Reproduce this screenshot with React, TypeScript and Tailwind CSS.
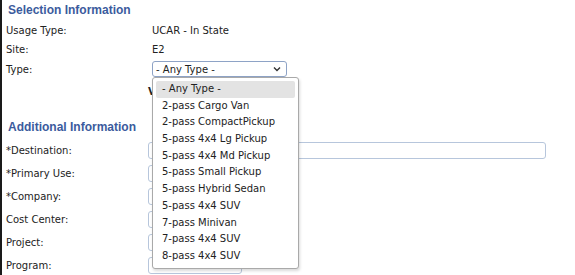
import React from "react";

const TYPES = [
  "- Any Type -",
  "2-pass Cargo Van",
  "2-pass CompactPickup",
  "5-pass 4x4 Lg Pickup",
  "5-pass 4x4 Md Pickup",
  "5-pass Small Pickup",
  "5-pass Hybrid Sedan",
  "5-pass 4x4 SUV",
  "7-pass Minivan",
  "7-pass 4x4 SUV",
  "8-pass 4x4 SUV",
];

const ADDITIONAL = [
  { label: "*Destination:", wide: true },
  { label: "*Primary Use:" },
  { label: "*Company:" },
  { label: "Cost Center:" },
  { label: "Project:" },
  { label: "Program:" },
];

function Heading({ children }: { children: React.ReactNode }) {
  return (
    <h2 className="pl-[2px] font-['Liberation_Sans',Arial,sans-serif] text-[12px] font-bold leading-[18px] text-[#3b5b9d]">
      {children}
    </h2>
  );
}

function Chevron() {
  return (
    <svg width="8" height="6" viewBox="0 0 8 6" className="text-[#333]">
      <path d="M1 1.5 L4 4.5 L7 1.5" fill="none" stroke="currentColor" strokeWidth="1.4" />
    </svg>
  );
}

export default function App() {
  return (
    <div className="h-[275px] w-[575px] overflow-hidden border-l-2 border-[#1a1a1a] bg-white font-['DejaVu_Sans',Verdana,sans-serif] text-[10px] text-[#222]">
      <div className="pl-1">
        <div className="pt-[1px]">
          <Heading>Selection Information</Heading>
        </div>

        <div className="mt-[2px] grid grid-cols-[146px_1fr] items-center">
          <span className="leading-[19px]">Usage Type:</span>
          <span className="leading-[19px]">UCAR - In State</span>
          <span className="leading-[20px]">Site:</span>
          <span className="leading-[20px]">E2</span>
          <span className="leading-[20px]">Type:</span>
          <div className="relative h-[20px]">
            <div className="mt-[1px] flex h-[16px] w-[135px] items-center justify-between rounded-[3px] border border-[#8ea3c6] bg-white pl-[3px] pr-[5px]">
              <span>- Any Type -</span>
              <Chevron />
            </div>

            <ul className="absolute left-0 top-[17px] z-10 w-[147px] rounded-[3px] border border-[#a9a9a9] bg-white px-[3px] py-[3px] shadow-[1px_2px_3px_rgba(0,0,0,0.15)]">
              {TYPES.map((t, i) => (
                <li
                  key={t}
                  className={
                    "h-[16.7px] rounded-[2px] pl-[6px] leading-[16.7px] " +
                    (i === 0 ? "bg-[#e3e3e3]" : "")
                  }
                >
                  {t}
                </li>
              ))}
            </ul>
          </div>
        </div>

        <div className="h-[24px] pl-[142px] leading-[24px] font-bold">Vehicle</div>

        <div className="mt-[14px]">
          <Heading>Additional Information</Heading>
        </div>

        <div className="mt-[3px] flex flex-col">
          {ADDITIONAL.map((f) => (
            <div key={f.label} className="grid h-[23px] grid-cols-[142px_1fr] items-center">
              <span>{f.label}</span>
              <div
                className={
                  "h-[17px] rounded-[3px] border border-[#b7c6dc] bg-white " +
                  (f.wide ? "w-[398px]" : "w-[94px]")
                }
              />
            </div>
          ))}
        </div>
      </div>
    </div>
  );
}
